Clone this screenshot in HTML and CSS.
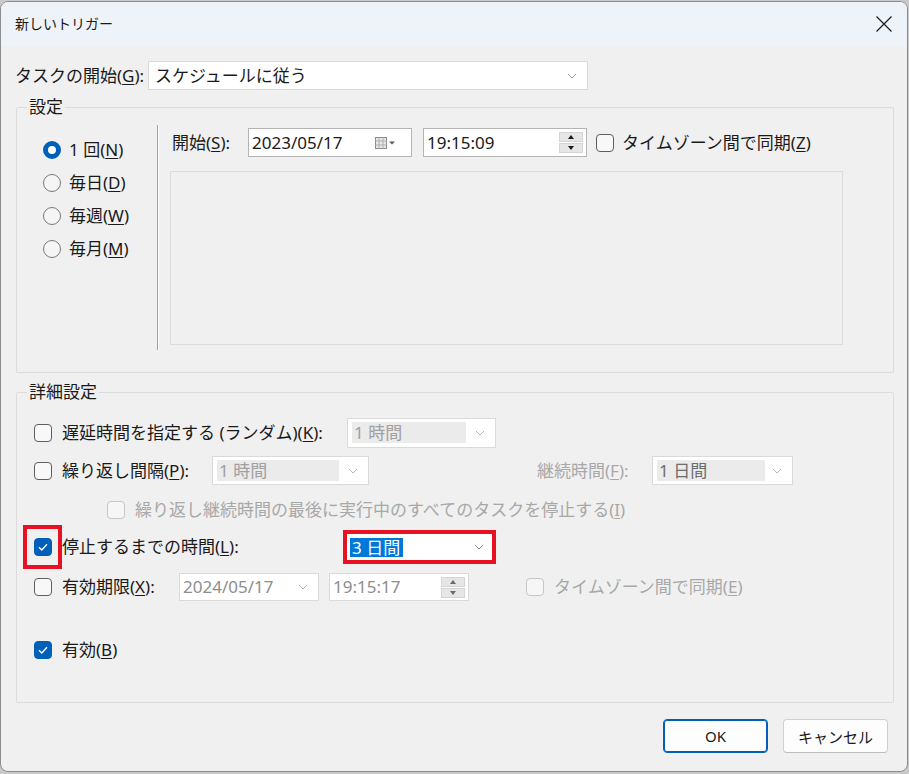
FILE: index.html
```html
<!DOCTYPE html>
<html lang="ja">
<head>
    <meta charset="UTF-8">
    <meta name="viewport" content="width=device-width, initial-scale=1.0">
    <title>新しいトリガー</title>
    <link rel="stylesheet" href="styles.css">
</head>
<body>
    <div class="dialog">
        <div class="titlebar">
            <span class="title">新しいトリガー</span>
            <svg class="close" width="18" height="18" viewBox="0 0 18 18">
                <path d="M1.5 1.5L16.5 16.5M16.5 1.5L1.5 16.5" stroke="#1a1a1a" stroke-width="1.2" fill="none"/>
            </svg>
        </div>

        <div class="content">
            <!-- タスクの開始 -->
            <div class="start-row">
                <span class="start-label">タスクの開始(<u>G</u>):</span>
                <div class="field combo start-combo">
                    <span class="value">スケジュールに従う</span>
                    <svg class="chevron" width="10" height="6" viewBox="0 0 10 6"><path d="M1 1L5 5L9 1" stroke="#9a9a9a" fill="none"/></svg>
                </div>
            </div>

            <!-- 設定 -->
            <fieldset class="group settings">
                <legend>設定</legend>
                <div class="settings-body">
                    <div class="radios">
                        <div class="radio-row"><span class="radio checked"></span><span>1 回(<u>N</u>)</span></div>
                        <div class="radio-row"><span class="radio"></span><span>毎日(<u>D</u>)</span></div>
                        <div class="radio-row"><span class="radio"></span><span>毎週(<u>W</u>)</span></div>
                        <div class="radio-row"><span class="radio"></span><span>毎月(<u>M</u>)</span></div>
                    </div>
                    <div class="divider"></div>
                    <div class="schedule">
                        <div class="schedule-row">
                            <span class="begin-label">開始(<u>S</u>):</span>
                            <div class="field date-field">
                                <span class="value">2023/05/17</span>
                                <svg class="calendar" width="22" height="12" viewBox="0 0 22 12">
                                    <rect x="0.5" y="0.5" width="11" height="11" fill="#e8e8e8" stroke="#8c8c8c"/>
                                    <path d="M0.5 4H11.5M0.5 8H11.5M4 0.5V11.5M8 0.5V11.5" stroke="#b0b0b0"/>
                                    <path d="M14 4.5H20L17 7.5Z" fill="#5a5a5a"/>
                                </svg>
                            </div>
                            <div class="field time-field">
                                <span class="value">19:15:09</span>
                                <div class="spinner">
                                    <span class="spin up"></span>
                                    <span class="spin down"></span>
                                </div>
                            </div>
                            <span class="check sync-check"></span>
                            <span class="sync-label">タイムゾーン間で同期(<u>Z</u>)</span>
                        </div>
                        <div class="detail-box"></div>
                    </div>
                </div>
            </fieldset>

            <!-- 詳細設定 -->
            <fieldset class="group advanced">
                <legend>詳細設定</legend>
                <div class="adv-body">
                    <div class="adv-row r1">
                        <span class="check"></span>
                        <span class="lbl lbl-delay">遅延時間を指定する (ランダム)(<u>K</u>):</span>
                        <div class="field combo disabled w-delay">
                            <span class="sel-bg sel-delay">1 時間</span>
                            <svg class="chevron" width="10" height="6" viewBox="0 0 10 6"><path d="M1 1L5 5L9 1" stroke="#b4b4b4" fill="none"/></svg>
                        </div>
                    </div>

                    <div class="adv-row r2">
                        <span class="check"></span>
                        <span class="lbl lbl-repeat">繰り返し間隔(<u>P</u>):</span>
                        <div class="field combo disabled w-repeat">
                            <span class="sel-bg sel-repeat">1 時間</span>
                            <svg class="chevron" width="10" height="6" viewBox="0 0 10 6"><path d="M1 1L5 5L9 1" stroke="#b4b4b4" fill="none"/></svg>
                        </div>
                        <span class="lbl muted lbl-duration">継続時間(<u>F</u>):</span>
                        <div class="field combo disabled w-duration">
                            <span class="sel-bg sel-duration dark">1 日間</span>
                            <svg class="chevron" width="10" height="6" viewBox="0 0 10 6"><path d="M1 1L5 5L9 1" stroke="#b4b4b4" fill="none"/></svg>
                        </div>
                    </div>

                    <div class="adv-row r3">
                        <span class="check disabled stop-all-check"></span>
                        <span class="lbl muted">繰り返し継続時間の最後に実行中のすべてのタスクを停止する(<u>I</u>)</span>
                    </div>

                    <div class="adv-row r4">
                        <span class="mark mark-check"><span class="check checked"><svg width="12" height="10" viewBox="0 0 12 10"><path d="M2 5.2L4.8 8L10 2.2" stroke="#fff" stroke-width="1.3" fill="none"/></svg></span></span>
                        <span class="lbl lbl-stop">停止するまでの時間(<u>L</u>):</span>
                        <div class="mark mark-combo">
                            <span class="selected">3 日間</span>
                            <svg class="chevron" width="10" height="6" viewBox="0 0 10 6"><path d="M1 1L5 5L9 1" stroke="#8a8a8a" fill="none"/></svg>
                        </div>
                    </div>

                    <div class="adv-row r5">
                        <span class="check"></span>
                        <span class="lbl lbl-expire">有効期限(<u>X</u>):</span>
                        <div class="field combo disabled w-expire">
                            <span class="value muted-value">2024/05/17</span>
                            <svg class="chevron" width="10" height="6" viewBox="0 0 10 6"><path d="M1 1L5 5L9 1" stroke="#b4b4b4" fill="none"/></svg>
                        </div>
                        <div class="field disabled w-expire-time">
                            <span class="value muted-value">19:15:17</span>
                            <div class="spinner small">
                                <span class="spin up light"></span>
                                <span class="spin down light"></span>
                            </div>
                        </div>
                        <span class="check disabled expire-sync"></span>
                        <span class="lbl muted">タイムゾーン間で同期(<u>E</u>)</span>
                    </div>

                    <div class="adv-row r6">
                        <span class="check checked"><svg width="12" height="10" viewBox="0 0 12 10"><path d="M2 5.2L4.8 8L10 2.2" stroke="#fff" stroke-width="1.3" fill="none"/></svg></span>
                        <span class="lbl">有効(<u>B</u>)</span>
                    </div>
                </div>
            </fieldset>

            <div class="buttons">
                <button class="btn primary">OK</button>
                <button class="btn">キャンセル</button>
            </div>
        </div>
    </div>
</body>
</html>
```

FILE: styles.css
```css
* {
    box-sizing: border-box;
}

body {
    margin: 0;
    background-color: #c9c9c9;
    font-family: "Noto Sans", "Noto Sans CJK JP", sans-serif;
    font-size: 17px;
    line-height: 20px;
    color: #1a1a1a;
}

u {
    text-underline-offset: 2px;
}

.dialog {
    width: 908px;
    height: 771px;
    margin-top: 1px;
    background-color: #f0f0f0;
    border: 1px solid #8c8c8c;
    border-radius: 8px;
    overflow: hidden;
    display: flex;
    flex-direction: column;
}

/* タイトルバー */
.titlebar {
    height: 44px;
    flex-shrink: 0;
    display: flex;
    align-items: center;
    justify-content: space-between;
    padding: 0 14px 0 14px;
    background-color: #eef2f9;
}

.title {
    font-size: 14px;
}

.content {
    padding: 0 13px 0 14px;
}

/* 入力欄 */
.field {
    display: flex;
    align-items: center;
    background-color: #fff;
    border: 1px solid #c8c8c8;
    position: relative;
}

.field .value {
    padding-left: 3px;
}

.chevron {
    position: absolute;
    right: 10px;
    top: 50%;
    margin-top: -3px;
}

.start-row {
    display: flex;
    align-items: center;
    margin-top: 15px;
    height: 29px;
}

.start-label {
    width: 133px;
}

.start-combo {
    width: 440px;
    height: 29px;
    border-color: #dadada;
}

.start-combo .value {
    padding-left: 6px;
}

.start-combo .chevron {
    right: 10px;
}

/* グループ */
.group {
    margin: 0 0 0 1px;
    padding: 0;
    border: 1px solid #dcdcdc;
    border-radius: 2px;
}

.group legend {
    margin-left: 10px;
    padding: 0 2px;
    line-height: 20px;
}

.settings {
    margin-top: 7px;
}

.settings-body {
    display: flex;
    padding: 8px 0 22px 0;
}

.radios {
    width: 140px;
    padding: 8px 0 0 26px;
}

.radio-row {
    display: flex;
    align-items: center;
    height: 33px;
    gap: 8px;
}

.radio {
    width: 18px;
    height: 18px;
    border-radius: 50%;
    border: 1px solid #7a7a7a;
    background-color: #f5f5f5;
    flex-shrink: 0;
}

.radio.checked {
    border: 5px solid #005fb8;
    background-color: #fff;
}

.divider {
    width: 2px;
    height: 225px;
    border-left: 1px solid #a0a0a0;
    border-right: 1px solid #ffffff;
}

.schedule {
    padding: 3px 0 0 11px;
}

.schedule-row {
    display: flex;
    align-items: center;
    height: 29px;
}

.begin-label {
    width: 76px;
    margin-left: 2px;
}

.date-field {
    width: 164px;
    height: 29px;
    border-color: #b4b4b4;
}

.calendar {
    position: absolute;
    right: 14px;
    top: 8px;
}

.time-field {
    width: 164px;
    height: 29px;
    margin-left: 11px;
    border-color: #b4b4b4;
}

.spinner {
    position: absolute;
    right: 3px;
    top: 3px;
    display: flex;
    flex-direction: column;
    gap: 1px;
}

.spin {
    width: 24px;
    height: 10px;
    background-color: #e6e6e6;
    border: 1px solid #d4d4d4;
    position: relative;
}

.spin::after {
    content: "";
    position: absolute;
    left: 8px;
    border-left: 3.5px solid transparent;
    border-right: 3.5px solid transparent;
}

.spin.up::after {
    top: 2px;
    border-bottom: 4px solid #1a1a1a;
}

.spin.down::after {
    top: 2px;
    border-top: 4px solid #1a1a1a;
}

.spin.light::after {
    border-bottom-color: #6a6a6a;
    border-top-color: #6a6a6a;
}

.spin.up.light::after {
    border-top: 0;
}

.spin.down.light::after {
    border-bottom: 0;
}

.spinner.small .spin {
    height: 10px;
}

.sync-check {
    margin-left: 9px;
}

.sync-label {
    margin-left: 8px;
}

.detail-box {
    width: 673px;
    height: 174px;
    margin-top: 14px;
    border: 1px solid #dcdcdc;
}

/* チェックボックス */
.check {
    width: 18px;
    height: 18px;
    flex-shrink: 0;
    border: 1px solid #5e5e5e;
    border-radius: 4px;
    background-color: #f8f8f8;
    display: flex;
    align-items: center;
    justify-content: center;
}

.check.checked {
    border-color: #005fb8;
    background-color: #005fb8;
}

.check.disabled {
    border-color: #c6c6c6;
    background-color: #f6f6f6;
}

/* 詳細設定 */
.advanced {
    margin-top: 9px;
}

.adv-body {
    padding: 16px 0 38px 17px;
}

.adv-row {
    display: flex;
    align-items: center;
    height: 29px;
}

.adv-row .lbl {
    margin-left: 10px;
    white-space: nowrap;
}

.lbl.muted,
.muted {
    color: #a8a8a8;
}

.r2 { margin-top: 9px; }
.r3 { margin-top: 13px; height: 24px; }
.r4 { margin-top: 3px; height: 44px; }
.r5 { margin-top: 4px; height: 28px; }
.r6 { margin-top: 34px; }

.lbl-delay { width: 285px; }
.lbl-repeat { width: 150px; }
.lbl-stop { width: 281px; }
.lbl-expire { width: 117px; }

.adv-row .lbl-duration {
    margin-left: 168px;
    width: 115px;
}

.stop-all-check {
    margin-left: 73px;
}

.combo.disabled {
    border-color: #dadada;
}

.field.disabled {
    border-color: #dadada;
}

.w-delay { width: 149px; height: 30px; }
.w-repeat { width: 157px; height: 29px; }
.w-duration { width: 141px; height: 29px; }
.w-expire { width: 140px; height: 28px; }

.w-expire-time {
    width: 140px;
    height: 28px;
    margin-left: 10px;
}

.sel-bg {
    margin-left: 4px;
    height: 21px;
    line-height: 21px;
    padding-left: 2px;
    background-color: #ebebeb;
    color: #a0a0a0;
}

.sel-bg.dark {
    color: #6e6e6e;
}

.sel-delay { width: 114px; }
.sel-repeat { width: 122px; }
.sel-duration { width: 108px; }

.muted-value {
    color: #8e8e8e;
}

.expire-sync {
    margin-left: 57px;
}

/* 赤枠 */
.mark {
    border: 4px solid #e81123;
    display: flex;
    align-items: center;
    position: relative;
}

.mark-check {
    width: 39px;
    height: 44px;
    margin-left: -11px;
    justify-content: center;
}

.adv-row .lbl-stop {
    margin-left: 0;
}

.mark-combo {
    width: 153px;
    height: 34px;
    background-color: #fff;
    padding-left: 3px;
}

.selected {
    background-color: #0078d7;
    color: #fff;
    padding: 0 3px 0 2px;
    line-height: 19px;
}

.mark-combo .chevron {
    right: 8px;
}

/* ボタン */
.buttons {
    display: flex;
    justify-content: flex-end;
    gap: 15px;
    margin: 16px 6px 0 0;
}

.btn {
    width: 105px;
    height: 34px;
    font-family: "Noto Sans", "Noto Sans CJK JP", sans-serif;
    font-size: 15px;
    color: #1a1a1a;
    background-color: #fdfdfd;
    border: 1px solid #d0d0d0;
    border-bottom-color: #bdbdbd;
    border-radius: 4px;
}

.btn.primary {
    border: 1px solid #005fb8;
    box-shadow: inset 0 0 0 1px #005fb8;
}
```
